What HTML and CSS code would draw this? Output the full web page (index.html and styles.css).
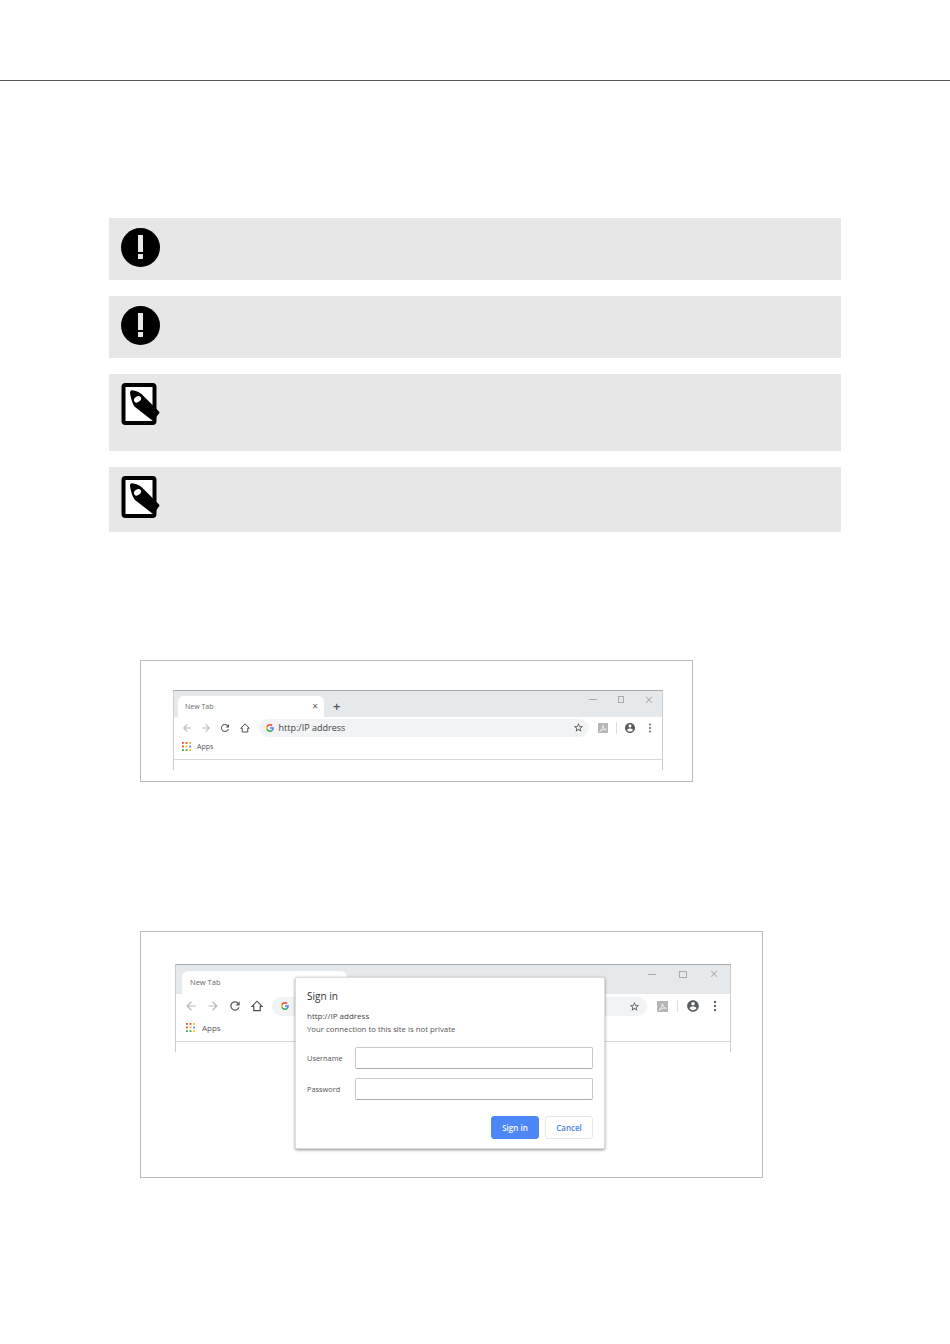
FILE: index.html
```html
<!DOCTYPE html>
<html lang="en">
<head>
    <meta charset="UTF-8">
    <meta name="viewport" content="width=device-width, initial-scale=1.0">
    <title>Sign in with a browser</title>
    <link rel="stylesheet" href="styles.css">
</head>
<body>
    <!-- shared icons -->
    <svg class="sprite" xmlns="http://www.w3.org/2000/svg">
        <symbol id="i-back" viewBox="0 0 24 24"><path d="M20 11H7.830l5.590-5.590L12 4l-8 8 8 8 1.410-1.410L7.830 13H20v-2z"/></symbol>
        <symbol id="i-forward" viewBox="0 0 24 24"><path d="M12 4l-1.410 1.410L16.170 11H4v2h12.170l-5.580 5.590L12 20l8-8z"/></symbol>
        <symbol id="i-reload" viewBox="0 0 24 24"><path d="M17.650 6.350A7.958 7.958 0 0012 4c-4.420 0-7.990 3.580-7.990 8s3.570 8 7.990 8c3.730 0 6.840-2.550 7.730-6h-2.080A5.990 5.990 0 0112 18c-3.310 0-6-2.690-6-6s2.690-6 6-6c1.660 0 3.140.690 4.220 1.780L13 11h7V4l-2.350 2.350z"/></symbol>
        <symbol id="i-home" viewBox="0 0 24 24"><path d="M3.500 12.500 12 3.800l8.500 8.700h-3V20h-11v-7.500z" fill="none" stroke="#4a4d50" stroke-width="2" stroke-linejoin="miter"/></symbol>
        <symbol id="i-star" viewBox="0 0 24 24"><path d="M22 9.240l-7.190-.620L12 2 9.190 8.630 2 9.240l5.460 4.730L5.820 21 12 17.270 18.180 21l-1.630-7.030L22 9.240zM12 15.400l-3.760 2.270 1-4.280-3.320-2.880 4.380-.380L12 6.100l1.710 4.040 4.380.380-3.320 2.880 1 4.280L12 15.400z"/></symbol>
        <symbol id="i-account" viewBox="0 0 24 24"><path d="M12 2C6.480 2 2 6.480 2 12s4.480 10 10 10 10-4.480 10-10S17.520 2 12 2zm0 3c1.660 0 3 1.340 3 3s-1.340 3-3 3-3-1.340-3-3 1.340-3 3-3zm0 14.200c-2.500 0-4.710-1.280-6-3.220.030-1.990 4-3.080 6-3.080 1.990 0 5.970 1.090 6 3.080-1.290 1.940-3.500 3.220-6 3.220z"/></symbol>
        <symbol id="i-dots" viewBox="0 0 24 24"><circle cx="12" cy="5" r="2"/><circle cx="12" cy="12" r="2"/><circle cx="12" cy="19" r="2"/></symbol>
        <symbol id="i-pdf" viewBox="0 0 24 24">
            <rect width="24" height="24" fill="#b4b6b8"/>
            <path d="M4 20c4-2 7-7 8-14 1 6 3 9 8 10-6-1-11 0-16 4z" fill="none" stroke="#fff" stroke-width="1.600"/>
        </symbol>
        <symbol id="i-google" viewBox="0 0 48 48">
            <path fill="#EA4335" d="M24 9.500c3.500 0 6.700 1.200 9.200 3.600l6.900-6.900C35.900 2.400 30.400 0 24 0 14.600 0 6.500 5.400 2.600 13.200l8 6.200C12.500 13.600 17.800 9.500 24 9.500z"/>
            <path fill="#4285F4" d="M47 24.500c0-1.600-.1-3.100-.4-4.500H24v9h12.900c-.6 3-2.200 5.500-4.700 7.200l7.700 6C44.400 37.900 47 31.800 47 24.500z"/>
            <path fill="#FBBC05" d="M10.600 28.600c-.5-1.400-.8-3-.8-4.600s.3-3.200.8-4.600l-8-6.200C.9 16.500 0 20.100 0 24s.9 7.500 2.600 10.800l8-6.200z"/>
            <path fill="#34A853" d="M24 48c6.500 0 11.900-2.100 15.900-5.800l-7.700-6c-2.200 1.500-4.900 2.300-8.200 2.300-6.200 0-11.500-4.100-13.400-9.900l-8 6.200C6.500 42.600 14.600 48 24 48z"/>
        </symbol>
        <symbol id="i-apps" viewBox="0 0 10 10">
            <rect width="2" height="2" fill="#ea4335"/><rect x="4" width="2" height="2" fill="#ea4335"/><rect x="8" width="2" height="2" fill="#fbbc05"/>
            <rect y="4" width="2" height="2" fill="#ea4335"/><rect x="4" y="4" width="2" height="2" fill="#fbbc05"/><rect x="8" y="4" width="2" height="2" fill="#4285f4"/>
            <rect y="8" width="2" height="2" fill="#34a853"/><rect x="4" y="8" width="2" height="2" fill="#34a853"/><rect x="8" y="8" width="2" height="2" fill="#fbbc05"/>
        </symbol>
        <symbol id="i-warning" viewBox="0 0 39 39">
            <circle cx="19.500" cy="19.500" r="19.500"/>
            <rect x="17" y="7" width="5" height="17" fill="#e7e7e7"/>
            <rect x="17" y="26" width="5" height="5" fill="#e7e7e7"/>
        </symbol>
        <symbol id="i-note" viewBox="0 0 39 42">
            <rect x="2.500" y="2" width="31" height="38" rx="2" fill="#fff" stroke="#000" stroke-width="4"/>
            <path d="M9 10c0-2 1-3 3-2.500 4 .5 7 2 9.500 4.500L38 28.500c.6.600.6 1.200 0 2l-5 6.500c-.6.700-1.400.7-2 .2L14 24c-2-2-4-8-5-14z"/>
            <ellipse cx="16.500" cy="16.300" rx="3.800" ry="2.800" fill="#fff" transform="rotate(-35 16.500 16.300)"/>
        </symbol>
    </svg>

    <div class="top-rule"></div>

    <main class="page">
        <div class="notices">
            <div class="notice">
                <svg class="notice-icon"><use href="#i-warning"/></svg>
            </div>
            <div class="notice">
                <svg class="notice-icon"><use href="#i-warning"/></svg>
            </div>
            <div class="notice notice-note notice-tall">
                <svg class="notice-icon note-icon"><use href="#i-note"/></svg>
            </div>
            <div class="notice notice-note">
                <svg class="notice-icon note-icon"><use href="#i-note"/></svg>
            </div>
        </div>

        <figure class="shot shot-small">
            <div class="browser">
                <div class="tabstrip">
                    <div class="tab">
                        <span class="tab-title">New Tab</span>
                        <span class="tab-close">&#215;</span>
                    </div>
                    <span class="new-tab">+</span>
                    <div class="window-controls">
                        <span class="win-min"></span>
                        <span class="win-max"></span>
                        <span class="win-close">&#215;</span>
                    </div>
                </div>
                <div class="toolbar">
                    <span class="tool tool-off"><svg><use href="#i-back"/></svg></span>
                    <span class="tool tool-off"><svg><use href="#i-forward"/></svg></span>
                    <span class="tool"><svg><use href="#i-reload"/></svg></span>
                    <span class="tool"><svg><use href="#i-home"/></svg></span>
                    <div class="omnibox">
                        <svg class="g-logo"><use href="#i-google"/></svg>
                        <span class="url">http:/IP address</span>
                        <svg class="star"><use href="#i-star"/></svg>
                    </div>
                    <span class="tool tool-ext"><svg class="pdf"><use href="#i-pdf"/></svg></span>
                    <span class="tool-sep"></span>
                    <span class="tool tool-account"><svg><use href="#i-account"/></svg></span>
                    <span class="tool tool-dots"><svg><use href="#i-dots"/></svg></span>
                </div>
                <div class="bookmarks">
                    <svg class="apps-icon"><use href="#i-apps"/></svg>
                    <span>Apps</span>
                </div>
            </div>
        </figure>

        <figure class="shot shot-large">
            <div class="browser">
                <div class="tabstrip">
                    <div class="tab">
                        <span class="tab-title">New Tab</span>
                    </div>
                    <div class="window-controls">
                        <span class="win-min"></span>
                        <span class="win-max"></span>
                        <span class="win-close">&#215;</span>
                    </div>
                </div>
                <div class="toolbar">
                    <span class="tool tool-off"><svg><use href="#i-back"/></svg></span>
                    <span class="tool tool-off"><svg><use href="#i-forward"/></svg></span>
                    <span class="tool"><svg><use href="#i-reload"/></svg></span>
                    <span class="tool"><svg><use href="#i-home"/></svg></span>
                    <div class="omnibox">
                        <svg class="g-logo"><use href="#i-google"/></svg>
                        <svg class="star"><use href="#i-star"/></svg>
                    </div>
                    <span class="tool tool-ext"><svg class="pdf"><use href="#i-pdf"/></svg></span>
                    <span class="tool-sep"></span>
                    <span class="tool tool-account"><svg><use href="#i-account"/></svg></span>
                    <span class="tool tool-dots"><svg><use href="#i-dots"/></svg></span>
                </div>
                <div class="bookmarks">
                    <svg class="apps-icon"><use href="#i-apps"/></svg>
                    <span>Apps</span>
                </div>

                <div class="dialog">
                    <h3>Sign in</h3>
                    <p class="dialog-url">http://IP address</p>
                    <p class="dialog-warn">Your connection to this site is not private</p>
                    <div class="field">
                        <label>Username</label>
                        <div class="input"></div>
                    </div>
                    <div class="field">
                        <label>Password</label>
                        <div class="input"></div>
                    </div>
                    <div class="dialog-buttons">
                        <span class="btn btn-primary">Sign in</span>
                        <span class="btn">Cancel</span>
                    </div>
                </div>
            </div>
        </figure>
    </main>
</body>
</html>
```

FILE: styles.css
```css
* {
    margin: 0;
    padding: 0;
    box-sizing: border-box;
}

body {
    background: #fff;
    font-family: "Open Sans", "Noto Sans", sans-serif;
    color: #444;
}

.sprite {
    display: none;
}

.top-rule {
    height: 81px;
    border-bottom: 1px solid #555;
}

.page {
    padding: 137px 109px 0;
}

/* grey notice boxes */
.notices {
    display: flex;
    flex-direction: column;
    gap: 16px;
}

.notice {
    background: #e7e7e7;
    padding: 10px 12px 13px;
}

.notice-note {
    padding-top: 9px;
    padding-bottom: 14px;
}

.notice-tall {
    padding-bottom: 26px;
}

.notice-icon {
    display: block;
    width: 39px;
    height: 39px;
}

.note-icon {
    height: 42px;
}

/* bordered screenshots */
.shot {
    border: 1px solid #bbb;
    margin-left: 31px;
}

.shot-small {
    --slot: 19.4px;
    --icon: 12px;
    width: 553px;
    margin-top: 128px;
    padding: 29px 29px 11px 32px;
}

.shot-large {
    --slot: 22px;
    --icon: 14px;
    width: 623px;
    margin-top: 149px;
    padding: 32px 31px 125px 34px;
}

.browser {
    position: relative;
    border: 1px solid #ccc;
    border-top-color: #a9abad;
    border-bottom: 0;
    background: #fff;
}

.shot-small .browser {
    padding-bottom: 10px;
}

.shot-large .browser {
    padding-bottom: 10px;
}

.tabstrip {
    display: flex;
    align-items: flex-end;
    background: #e6e9ec;
    padding-left: 4px;
}

.shot-small .tabstrip {
    height: 26px;
}

.shot-large .tabstrip {
    height: 29px;
    padding-left: 6px;
}

.tab {
    display: flex;
    align-items: center;
    justify-content: space-between;
    background: #fff;
    border-radius: 6px 6px 0 0;
    color: #666;
}

.shot-small .tab {
    width: 146px;
    height: 21px;
    padding: 0 6px 1px 7px;
    font-size: 7px;
}

.shot-large .tab {
    width: 165px;
    height: 23px;
    padding: 0 8px 2px;
    font-size: 7.5px;
}

.tab-close {
    font-size: 10px;
    color: #555;
}

.new-tab {
    align-self: center;
    margin: 5px 0 0 9px;
    font-size: 13px;
    font-weight: 600;
    line-height: 1;
    color: #555;
}

.window-controls {
    display: flex;
    align-items: center;
    align-self: flex-start;
    margin-left: auto;
    color: #999;
}

.shot-small .window-controls {
    height: 17px;
    gap: 21px;
    padding-right: 9px;
}

.shot-large .window-controls {
    height: 18px;
    gap: 23px;
    padding-right: 12px;
}

.win-min {
    width: 8px;
    height: 1px;
    background: #aaa;
}

.win-max {
    width: 6px;
    height: 7px;
    border: 1px solid #aaa;
}

.shot-large .win-max {
    width: 8px;
    height: 7px;
}

.win-close {
    font-size: 14px;
    font-weight: 300;
    line-height: 1;
}

/* toolbar row */
.toolbar {
    display: flex;
    align-items: center;
}

.shot-small .toolbar {
    height: 21px;
    padding: 0 5px 0 3px;
}

.shot-large .toolbar {
    height: 24px;
    padding: 0 8px 0 4px;
}

.tool {
    display: flex;
    align-items: center;
    justify-content: center;
    flex: none;
    width: var(--slot);
    fill: #5a5d60;
}

.tool svg {
    width: var(--icon);
    height: var(--icon);
}

.tool-off {
    fill: #b6b9bc;
}

.omnibox {
    display: flex;
    align-items: center;
    flex: 1;
    background: #f1f3f4;
    border-radius: 10px;
    margin-left: 4px;
    padding-left: 7px;
    font-size: 9px;
    color: #444;
}

.shot-small .omnibox {
    height: 18px;
}

.shot-large .omnibox {
    height: 19px;
    padding-left: 9px;
}

.g-logo {
    width: 8px;
    height: 8px;
    flex: none;
}

.url {
    margin-left: 5px;
}

.star {
    width: 11px;
    height: 11px;
    margin-left: auto;
    margin-right: 5px;
    fill: #555;
}

.shot-large .star {
    margin-right: 7px;
}

.tool-ext {
    width: 27px;
}

.tool .pdf {
    width: 10px;
    height: 10px;
}

.tool-sep {
    width: 1px;
    height: 12px;
    background: #ddd;
    flex: none;
}

.tool-account {
    width: 26px;
}

.tool-dots {
    width: 14px;
}

.shot-large .tool-ext {
    width: 30px;
}

.shot-large .tool-account {
    width: 30px;
}

.shot-large .tool .pdf {
    width: 11px;
    height: 11px;
}

/* bookmarks row */
.bookmarks {
    display: flex;
    align-items: center;
    gap: 6px;
    border-bottom: 1px solid #d6d6d6;
    color: #555;
}

.shot-small .bookmarks {
    height: 22px;
    padding: 0 0 4px 8px;
    font-size: 7px;
}

.shot-large .bookmarks {
    height: 24px;
    gap: 7px;
    padding: 0 0 4px 10px;
    font-size: 8px;
}

.apps-icon {
    width: 9px;
    height: 9px;
    flex: none;
}

/* http auth dialog, sits on top of the browser */
.dialog {
    position: absolute;
    left: 119px;
    top: 12px;
    width: 310px;
    height: 172px;
    background: #fff;
    border: 1px solid #ddd;
    border-radius: 2px;
    box-shadow: 0 1px 3px rgba(0, 0, 0, 0.45);
    padding: 11px 11px 0;
    font-size: 8px;
    color: #555;
}

.dialog h3 {
    font-size: 10px;
    font-weight: 400;
    color: #333;
    line-height: 14px;
}

.dialog-url {
    margin-top: 6px;
    color: #444;
    line-height: 13px;
}

.dialog-warn {
    margin-top: 1px;
    font-size: 7.8px;
    line-height: 13px;
}

.field {
    display: flex;
    align-items: center;
    justify-content: space-between;
    margin-top: 9px;
    font-size: 7.4px;
}

.dialog-warn + .field {
    margin-top: 11px;
}

.input {
    width: 238px;
    height: 22px;
    border: 1px solid #c9c9c9;
    border-bottom-color: #aaa;
    border-radius: 2px;
}

.dialog-buttons {
    display: flex;
    justify-content: flex-end;
    gap: 6px;
    margin-top: 16px;
}

.btn {
    display: flex;
    align-items: center;
    justify-content: center;
    width: 48px;
    height: 23px;
    border: 1px solid #e6e6e6;
    border-radius: 3px;
    color: #4d7fe8;
    font-weight: 600;
    font-size: 8px;
}

.btn-primary {
    background: #4d86f5;
    border-color: #4d86f5;
    color: #fff;
}
```
